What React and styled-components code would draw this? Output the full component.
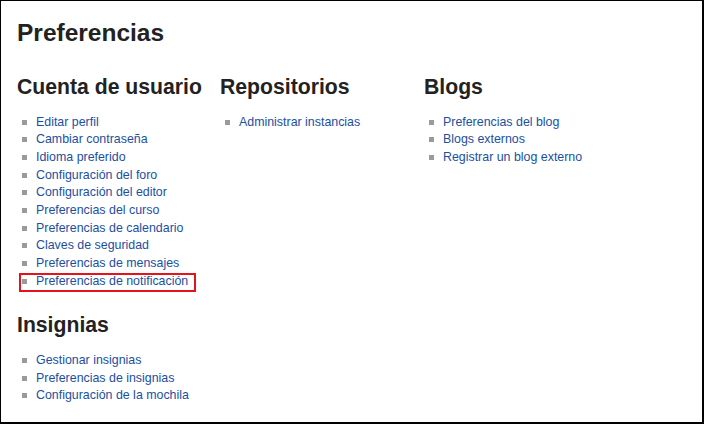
import React from "react";
import styled, { createGlobalStyle } from "styled-components";

const GlobalStyle = createGlobalStyle`
  html, body {
    margin: 0;
    padding: 0;
    background: #fff;
  }
  body {
    font-family: "Liberation Sans", Arial, Helvetica, sans-serif;
  }
`;

const sections = [
  {
    title: "Cuenta de usuario",
    links: [
      "Editar perfil",
      "Cambiar contraseña",
      "Idioma preferido",
      "Configuración del foro",
      "Configuración del editor",
      "Preferencias del curso",
      "Preferencias de calendario",
      "Claves de seguridad",
      "Preferencias de mensajes",
      "Preferencias de notificación",
    ],
    highlight: "Preferencias de notificación",
  },
  { title: "Repositorios", links: ["Administrar instancias"] },
  {
    title: "Blogs",
    links: ["Preferencias del blog", "Blogs externos", "Registrar un blog externo"],
  },
  {
    title: "Insignias",
    links: [
      "Gestionar insignias",
      "Preferencias de insignias",
      "Configuración de la mochila",
    ],
  },
];

const App = () => {
  return (
    <>
      <GlobalStyle />
      <Frame>
        <Title>Preferencias</Title>
        <Grid>
          {sections.map((section) => (
            <Section key={section.title}>
              <SectionTitle>{section.title}</SectionTitle>
              <LinkList>
                {section.links.map((link) => (
                  <Item key={link} $highlighted={link === section.highlight}>
                    <ItemLink href="#">{link}</ItemLink>
                  </Item>
                ))}
              </LinkList>
            </Section>
          ))}
        </Grid>
      </Frame>
    </>
  );
};

export default App;

const Frame = styled.div`
  box-sizing: border-box;
  width: 704px;
  height: 424px;
  border: 1px solid #000;
  border-right-width: 2px;
  border-bottom-width: 2px;
  padding: 17px 16px 0;
  overflow: hidden;
`;

const Title = styled.h1`
  margin: 0 0 28px;
  font-size: 24.5px;
  line-height: 29px;
  font-weight: 700;
  color: #222;
`;

const Grid = styled.div`
  display: grid;
  grid-template-columns: 203px 204px 204px;
  row-gap: 23px;
`;

const Section = styled.section`
  display: flex;
  flex-direction: column;
`;

const SectionTitle = styled.h2`
  margin: 0 0 14px;
  font-size: 21.2px;
  line-height: 24.6px;
  font-weight: 700;
  color: #222;
  white-space: nowrap;
`;

const LinkList = styled.ul`
  list-style: none;
  margin: 0;
  padding: 0;
`;

const Item = styled.li`
  position: relative;
  width: fit-content;
  padding-left: 19px;
  font-size: 12.4px;
  line-height: 17.67px;
  white-space: nowrap;

  &::before {
    content: "";
    position: absolute;
    left: 5px;
    top: 6px;
    width: 5px;
    height: 5px;
    background: #9a9a9a;
  }

  ${({ $highlighted }) =>
    $highlighted &&
    `
    &::after {
      content: "";
      position: absolute;
      left: 2px;
      right: -8px;
      top: 0;
      bottom: -2px;
      border: 2px solid #e4141c;
      pointer-events: none;
    }
  `}
`;

const ItemLink = styled.a`
  color: #1b4f9f;
  text-decoration: none;
`;
